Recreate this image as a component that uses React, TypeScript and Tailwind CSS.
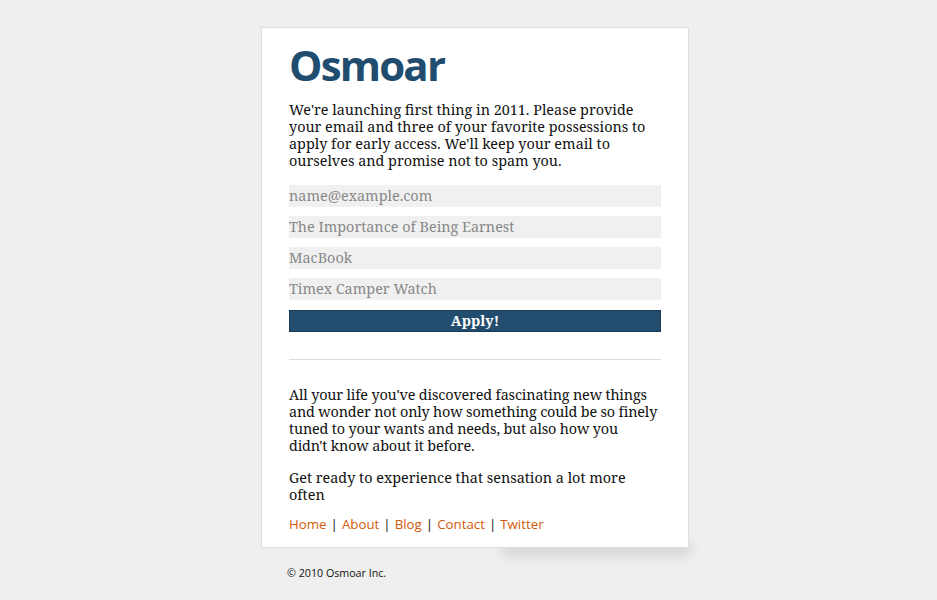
import React from "react";

const serif = { fontFamily: "'Noto Serif', 'Droid Serif', 'DejaVu Serif', serif" };

export default function App() {
  const inputs = [
    "name@example.com",
    "The Importance of Being Earnest",
    "MacBook",
    "Timex Camper Watch",
  ];
  const links = ["Home", "About", "Blog", "Contact", "Twitter"];
  return (
    <div className="min-h-[600px] w-full bg-[#efefef] pt-[27px]">
      <div className="ml-[261px] w-[428px]">
        <div className="relative">
          <div className="absolute bottom-[2px] left-[55%] right-[4px] h-[14px] shadow-[6px_10px_12px_rgba(0,0,0,0.11)]" />
          <div className="relative border border-[#dddddd] bg-white px-[27px] pb-[14px] pt-[16px]">
            <h1 className="font-['Open_Sans'] text-[42px] font-bold leading-[42px] tracking-[-1.8px] text-[#204c70]">
              Osmoar
            </h1>
            <p className="mt-[15px] text-[14.4px] leading-[17px] text-[#111]" style={serif}>
              We're launching first thing in 2011. Please provide your email and three of your
              favorite possessions to apply for early access. We'll keep your email to ourselves
              and promise not to spam you.
            </p>
            <div className="mt-[16px] flex flex-col gap-[9px]">
              {inputs.map((p) => (
                <input
                  key={p}
                  placeholder={p}
                  className="h-[22px] w-full bg-[#f0f0f0] px-0 text-[14.4px] leading-[22px] text-[#333] outline-none placeholder:text-[#888]"
                  style={serif}
                />
              ))}
              <button
                className="mt-px h-[22px] w-full border border-[#183a57] bg-[#234d6e] text-[14.4px] font-bold leading-[20px] text-white"
                style={serif}
              >
                Apply!
              </button>
            </div>
            <hr className="mt-[27px] border-t border-[#dddddd]" />
            <p
              className="mt-[26px] text-[14.4px] leading-[17px] tracking-[-0.16px] text-[#111]"
              style={serif}
            >
              All your life you've discovered fascinating new things and wonder not only how
              something could be so finely tuned to your wants and needs, but also how you
              <br />
              didn't know about it before.
            </p>
            <p className="mt-[15px] text-[14.4px] leading-[17px] text-[#111]" style={serif}>
              Get ready to experience that sensation a lot more often
            </p>
            <div className="mt-[13px] font-['Open_Sans'] text-[13.3px] leading-[17px] text-[#111]">
              {links.map((l, i) => (
                <span key={l}>
                  {i > 0 && <span className="mx-[4px]">|</span>}
                  <a href="#" className="text-[#d25a0b]">
                    {l}
                  </a>
                </span>
              ))}
            </div>
          </div>
        </div>
        <p className="ml-[26px] mt-[18px] font-['Open_Sans'] text-[10.7px] leading-[14px] text-[#111]">
          © 2010 Osmoar Inc.
        </p>
      </div>
    </div>
  );
}
